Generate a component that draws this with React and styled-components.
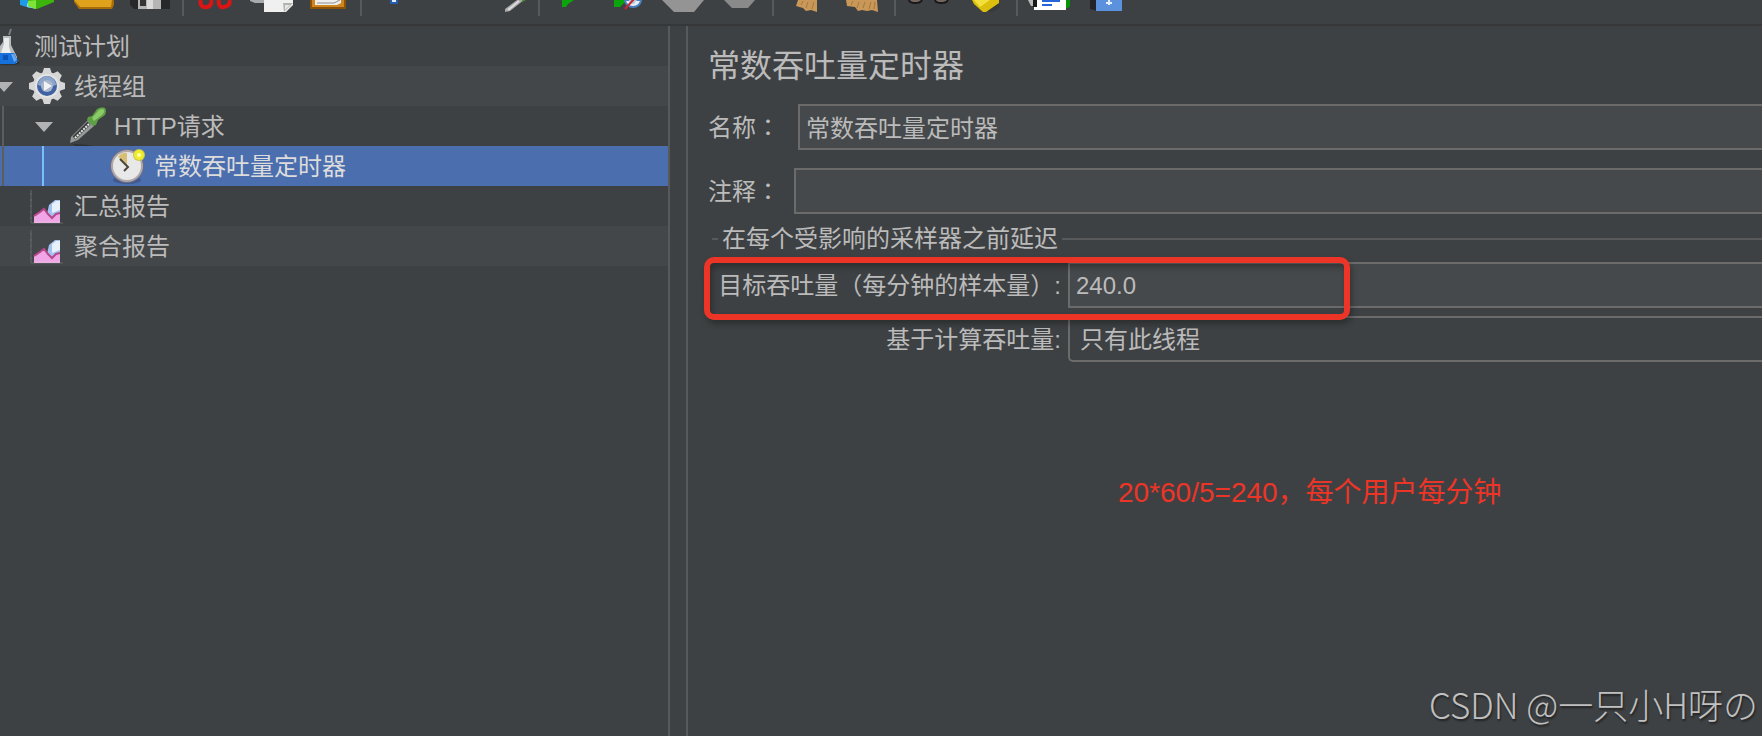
import styled, { createGlobalStyle, ThemeProvider } from 'styled-components';

const theme = {
  color: {
    background: '#3e4143',
    stripe: '#43474a',
    selected: '#4b6eaf',
    field: '#46494b',
    border: '#6b6b6b',
    line: '#58595a',
    text: '#bbbbbb',
    mark: '#ec3527',
  },
};

const GlobalStyle = createGlobalStyle`
  * {
    box-sizing: border-box;
  }

  body {
    margin: 0;
    overflow: hidden;
    background: ${theme.color.background};
    color: ${theme.color.text};
    font-family: 'Liberation Sans', 'Noto Sans CJK SC', sans-serif;
    font-size: 24px;
    line-height: 28px;
  }
`;

const Page = styled.div`
  position: relative;
  display: flex;
  flex-direction: column;
  min-height: 100vh;
`;

const Toolbar = styled.header`
  display: flex;
  height: 26px;
  padding-left: 10px;
  border-bottom: 2px solid #353739;
`;

const ToolButton = styled.button`
  flex: none;
  width: 56px;
  height: 24px;
  padding: 0;
  border: 0;
  background: none;

  svg {
    display: block;
  }
`;

const Separator = styled.span`
  flex: none;
  width: 2px;
  height: 16px;
  margin: 0 4px;
  background: ${({ theme }) => theme.color.line};
`;

const Workspace = styled.div`
  display: flex;
  flex: 1;
  gap: 16px;
`;

const Tree = styled.ul`
  flex: none;
  width: 670px;
  margin: 0;
  padding: 0;
  border-right: 2px solid ${({ theme }) => theme.color.line};
  list-style: none;
`;

const TreeRow = styled.li`
  display: flex;
  height: 40px;
  background: ${({ $selected, theme }) => ($selected ? theme.color.selected : 'none')};
  color: ${({ $selected }) => ($selected ? '#dcdcdc' : 'inherit')};
  line-height: 42px;

  &:nth-child(even) {
    background: ${({ $selected, theme }) => ($selected ? theme.color.selected : theme.color.stripe)};
  }
`;

const Guide = styled.span`
  flex: none;
  width: 40px;
  height: 40px;
  padding-left: 2px;

  &::before {
    content: '';
    display: block;
    width: 2px;
    height: 40px;
    background: ${({ $active }) => ($active ? '#79bdfb' : '#5b5d5f')};
  }
`;

const Toggle = styled.span`
  flex: none;
  width: 28px;
  height: 40px;

  svg {
    display: block;
    overflow: visible;
  }
`;

const TreeIcon = styled.span`
  flex: none;
  width: ${({ $width }) => $width}px;
  height: 40px;
  margin-right: 8px;

  svg {
    display: block;
    overflow: visible;
  }
`;

const Panel = styled.main`
  position: relative;
  flex: 1;
  min-width: 0;
  padding: 16px 0 0 20px;
  border-left: 2px solid ${({ theme }) => theme.color.line};
`;

const Title = styled.h1`
  margin: 0 0 14px;
  font-size: 32px;
  font-weight: normal;
  line-height: 48px;
`;

const FormRow = styled.div`
  display: flex;
  align-items: center;
  gap: ${({ $gap }) => $gap}px;
  margin-bottom: ${({ $space }) => $space}px;
`;

const Label = styled.label`
  flex: none;
  white-space: nowrap;
`;

const Colon = styled.span`
  font-family: 'Noto Sans CJK TC', sans-serif;
`;

const TextField = styled.input`
  flex: 1;
  min-width: 0;
  width: 100%;
  height: 46px;
  padding: 0 6px 2px;
  border: 2px solid ${({ theme }) => theme.color.border};
  border-right: 0;
  border-radius: 0;
  outline: 0;
  background: ${({ theme }) => theme.color.field};
  color: inherit;
  font: inherit;
`;

const Select = styled.select`
  width: 100%;
  height: 46px;
  padding: 2px 10px 0;
  border: 2px solid ${({ theme }) => theme.color.border};
  border-right: 0;
  border-radius: 5px 0 0 5px;
  outline: 0;
  appearance: none;
  background: transparent;
  color: inherit;
  font: inherit;
`;

const Group = styled.fieldset`
  min-width: 0;
  margin: 0 0 0 4px;
  padding: 0 0 0 6px;
  border: 0;
  border-top: 2px solid ${({ theme }) => theme.color.line};
`;

const Legend = styled.legend`
  padding: 0 4px;
`;

const GroupGrid = styled.div`
  position: relative;
  display: grid;
  grid-template-columns: 343px 1fr;
  align-items: center;
  gap: 8px 7px;
  padding-top: 9px;

  ${Label} {
    padding-top: 2px;
    text-align: right;
  }

  ${TextField} {
    padding: 2px 6px 0;
  }
`;

const Highlight = styled.div`
  position: absolute;
  top: 4px;
  left: -14px;
  width: 646px;
  height: 63px;
  border: 6px solid ${({ theme }) => theme.color.mark};
  border-radius: 10px;
  box-shadow: 2px 4px 6px rgba(0, 0, 0, 0.3), inset 2px 4px 6px rgba(0, 0, 0, 0.3);
  pointer-events: none;
`;

const Note = styled.p`
  position: absolute;
  top: 449px;
  left: 430px;
  margin: 0;
  color: ${({ theme }) => theme.color.mark};
  font-size: 28px;
  line-height: 36px;
  white-space: nowrap;
`;

const Watermark = styled.div`
  position: absolute;
  right: 4px;
  bottom: 8px;
  color: #c0c0c0;
  font-family: 'Noto Sans CJK SC', sans-serif;
  font-size: 35px;
  font-weight: 300;
  line-height: 48px;
  text-shadow: 1px 2px 2px rgba(0, 0, 0, 0.5);
  white-space: nowrap;
`;

const tools = [
  [
    {
      label: '模板',
      art: (
        <>
          <path d="M10 0h10v8l-10-3z" fill="#1e9be6" />
          <path d="M17 3l9 2v4l-9-2z" fill="#8ed9f2" />
          <path d="M18 0h26v2L27 9l-9-3z" fill="#3db40c" />
          <path d="M18 1l8-1v9l-8-3z" fill="#7ee43a" />
        </>
      ),
    },
    {
      label: '打开',
      art: (
        <>
          <path d="M8 0h40v5l-2 4H13L8 2z" fill="#a86c08" />
          <path d="M8 0h38l-1 7H14z" fill="#e0a11d" />
        </>
      ),
    },
    {
      label: '保存',
      art: (
        <>
          <path d="M8 0h40v9H12l-4-4z" fill="#27282a" />
          <path d="M16 0h23v9H16z" fill="#b5b5b5" />
          <path d="M18 0h6v6h-6z" fill="#343434" />
          <path d="M25 0h6v9h-6z" fill="#dadada" />
        </>
      ),
    },
  ],
  [
    {
      label: '剪切',
      art: (
        <g fill="none" stroke="#dc1414" strokeWidth="4">
          <path d="M13 0c-2 5 2 8 6 7s5-4 4-7" />
          <path d="M31 0c-1 4 1 8 5 7s7-3 5-7" />
        </g>
      ),
    },
    {
      label: '复制',
      art: (
        <>
          <path d="M6 0h17v3H11L6 1z" fill="#a8abad" />
          <path d="M20 0h29v5l-7 7H20z" fill="#f0f0f0" />
          <path d="M39 3h10l-9 9z" fill="#aeb5ad" />
          <path d="M41 5h5l-5 5z" fill="#e6e8e6" />
        </>
      ),
    },
    {
      label: '粘贴',
      art: (
        <>
          <path d="M10 0h36v9H10z" fill="#8b5207" />
          <path d="M12 0h32v7H12z" fill="#cf8620" />
          <path d="M15 0h26v3l-4 2H15z" fill="#efefef" />
          <path d="M17 3h17l6-3" fill="none" stroke="#8d8d8d" />
        </>
      ),
    },
  ],
  [
    {
      label: '展开',
      art: (
        <>
          <path d="M24 0h8v4h-8z" fill="#2759ad" />
          <path d="M26 0h4v2h-4z" fill="#e2ecf8" />
        </>
      ),
    },
    { label: '折叠', art: null },
    {
      label: '切换',
      art: (
        <>
          <path d="M39 0h7L32 11l-5 1v-3z" fill="#a9aaa9" />
          <path d="M41 1L30 10" stroke="#dcdcdc" strokeWidth="2" />
          <path d="M44 0h4l-4 2z" fill="#4d8f38" />
        </>
      ),
    },
  ],
  [
    { label: '启动', art: <path d="M18 0h12L24 4l-2 3h-4z" fill="#0aa50a" /> },
    {
      label: '不停顿启动',
      art: (
        <>
          <path d="M14 0h13l-7 7h-6z" fill="#0aa50a" />
          <path d="M25 0a8 7 0 0 0 16 0z" fill="#e9eff5" stroke="#4a80bd" strokeWidth="2" />
          <path d="M29 0h8l-3 4h-4z" fill="#b9cad9" />
          <path d="M25 9L34-1" stroke="#cf2230" strokeWidth="2" />
        </>
      ),
    },
    { label: '停止', art: <path d="M6 0h42L38 12H18z" fill="#949494" /> },
    { label: '关闭', art: <path d="M12 0h31l-7 8H20z" fill="#8a8a8a" /> },
  ],
  [
    {
      label: '清除',
      art: (
        <>
          <path d="M20 0h19v12l-6-2-5 1-3-3-7-2z" fill="#c99858" />
          <path d="M23 5l2-4M28 8l2-6M34 9l2-7" stroke="#a37840" />
        </>
      ),
    },
    {
      label: '清除全部',
      art: (
        <>
          <path d="M12 0h31l1 12-6-2-5 1-5-1-4 1-3-4-8-1z" fill="#c99858" />
          <path d="M17 5l2-4M23 8l2-6M29 8l2-6M35 9l2-7M40 9l1-7" stroke="#a37840" />
        </>
      ),
    },
  ],
  [
    {
      label: '查找',
      art: (
        <g fill="#75665f" stroke="#17181a" strokeWidth="2">
          <path d="M9 0c1 4 11 4 13 0" />
          <path d="M35 0c1 4 11 4 13 0" />
        </g>
      ),
    },
    {
      label: '重置查找',
      art: (
        <>
          <path d="M18 2l16 10q10-2 10-6V4z" fill="#37393a" />
          <path d="M16 0h27v3L30 12h-3L18 4z" fill="#dcbf0d" />
          <path d="M18 0h16L24 7z" fill="#f3df3d" />
        </>
      ),
    },
  ],
  [
    {
      label: '函数助手',
      art: (
        <>
          <path d="M6 0h8v6H9z" fill="#bababa" />
          <path d="M12 0h32v10H12z" fill="#ffffff" />
          <path d="M11 0h4v7h-4z" fill="#17181a" />
          <path d="M44 0h4v6l-2 2h-2z" fill="#079407" />
          <path d="M20 1h18M20 5h10" stroke="#2565dc" strokeWidth="2" />
        </>
      ),
    },
    {
      label: '帮助',
      art: (
        <>
          <path d="M12 0h8v11l-8-2z" fill="#222426" />
          <path d="M18 0h26v11H18z" fill="#5b91dd" />
          <path d="M31 0v5M28 3h6" stroke="#e5effc" strokeWidth="2" />
        </>
      ),
    },
  ],
];

const FlaskIcon = () => (
  <svg width="27" height="40" viewBox="0 0 27 40" aria-hidden="true">
    <ellipse cx="8" cy="37" rx="12" ry="2" fill="#303234" />
    <path d="M9 9l2-6" stroke="#7c7f82" strokeWidth="2" />
    <path d="M3 10h8v9l6 12v6H0V20l3-4z" fill="#b9bdc0" />
    <path d="M4 12h5v9l2 6H1l3-9z" fill="#eceded" />
    <path d="M0 27h14l4 8-3 3H0z" fill="#1671dd" />
    <path d="M11 28h3l3 6-3 2z" fill="#6aa6ee" />
    <path d="M3 29h5v5H3z" fill="#0755b6" />
  </svg>
);

const GearIcon = () => (
  <svg width="38" height="40" viewBox="0 0 38 40" aria-hidden="true">
    <g fill="#d6d6d6">
      <circle cx="19" cy="20" r="14" />
      {[0, 45, 90, 135].map((angle) => (
        <path key={angle} d="M16 2h6l2 6v24l-2 6h-6l-2-6V8z" transform={`rotate(${angle} 19 20)`} />
      ))}
    </g>
    <circle cx="19" cy="20" r="12" fill="#e4e4e4" />
    <circle cx="19" cy="20" r="10" fill="#3f62a3" />
    <path d="M10 19a9 9 0 0 1 18 0q-9 4-18 0z" fill="#8ca5cb" />
    <circle cx="19" cy="20" r="6" fill="#a9b6cc" />
    <path d="M16 15l8 5-8 5z" fill="#f1f2f4" />
  </svg>
);

const DropperIcon = () => (
  <svg width="38" height="40" viewBox="0 0 38 40" aria-hidden="true">
    <path d="M4 38q12 0 22 2H8z" fill="#2d2f30" />
    <path d="M20 14l6 6-16 14-8 3 1-6z" fill="#969997" />
    <path d="M21 17L6 32" stroke="#3a3e3c" strokeWidth="4" />
    <path d="M21 18L7 32" stroke="#e9eae9" strokeWidth="2" strokeDasharray="2 1" />
    <path d="M20 11l4-1 5-7q5-3 8-1 2 3 0 7l-7 5-2 5-3 1-6-6z" fill="#5d9f45" />
    <path d="M24 12l7-8q4-2 5 0t-2 5l-8 6z" fill="#8bcb68" />
  </svg>
);

const ClockIcon = () => (
  <svg width="38" height="40" viewBox="0 0 38 40" aria-hidden="true">
    <ellipse cx="19" cy="34" rx="14" ry="4" fill="#41598f" />
    <circle cx="19" cy="20" r="17" fill="#6b6c8d" />
    <circle cx="19" cy="20" r="16" fill="#b0a8a8" />
    <circle cx="19" cy="20" r="14" fill="#e8e8e8" />
    <path d="M19 20l-9-9q4-5 9-4z" fill="#d9bf75" />
    <path d="M12 13l8 8-4 4" fill="none" stroke="#4a463f" strokeWidth="2" />
    <circle cx="31" cy="9" r="6" fill="#c9c64c" />
    <circle cx="31" cy="9" r="5" fill="#f0ec2a" />
    <circle cx="31" cy="9" r="2" fill="#ffffb4" />
  </svg>
);

const ReportIcon = () => (
  <svg width="38" height="40" viewBox="0 0 38 40" aria-hidden="true">
    <path d="M3 4v33h32" fill="none" stroke="#65686a" strokeWidth="1" />
    <path d="M2 8h2M2 14h2M2 20h2M2 26h2M2 32h2" stroke="#65686a" />
    <path d="M19 28l2-9 6-5h5v18l-8 1z" fill="#a3c2f0" />
    <path d="M24 18l4-3h4v9l-8 3z" fill="#e6f1fc" />
    <path d="M6 37v-7l6-4 4-3 4 5 4 4 4-4h4v9z" fill="#f0a6e6" />
    <path d="M6 30l6-4 4-3 4 5 4 4 4-4 4-1" fill="none" stroke="#b6488a" strokeWidth="2" />
    <path d="M6 36h26" stroke="#e6b9df" />
  </svg>
);

const nodes = [
  { name: '测试计划', level: 0, icon: <FlaskIcon /> },
  { name: '线程组', level: 1, open: true, icon: <GearIcon /> },
  { name: 'HTTP请求', level: 2, open: true, guides: ['a'], icon: <DropperIcon /> },
  { name: '常数吞吐量定时器', level: 3, guides: ['a', 'b'], selected: true, icon: <ClockIcon /> },
  { name: '汇总报告', level: 1, icon: <ReportIcon /> },
  { name: '聚合报告', level: 1, icon: <ReportIcon /> },
];

const ToolGroup = ({ items, first }) => (
  <>
    {!first && <Separator />}
    {items.map(({ label, art }) => (
      <ToolButton key={label} type="button" aria-label={label}>
        <svg width="56" height="24" viewBox="0 0 56 24" aria-hidden="true">
          {art}
        </svg>
      </ToolButton>
    ))}
  </>
);

const TreeNode = ({ name, level, open, guides = [], selected, icon }) => (
  <TreeRow role="treeitem" aria-level={level + 1} aria-selected={!!selected} $selected={selected}>
    {guides.map((guide, index) => (
      <Guide key={guide} $active={index === 1} />
    ))}
    {level > 0 && (
      <Toggle>
        {open && (
          <svg width="28" height="40" viewBox="0 0 28 40" aria-hidden="true">
            <path d="M-5 16h18l-9 10z" fill="#b2b3b4" />
          </svg>
        )}
      </Toggle>
    )}
    <TreeIcon $width={level === 0 ? 26 : 38}>{icon}</TreeIcon>
    {name}
  </TreeRow>
);

const App = () => (
  <ThemeProvider theme={theme}>
    <GlobalStyle />
    <Page lang="zh-CN">
      <Toolbar>
        {tools.map((items, index) => (
          <ToolGroup key={items[0].label} items={items} first={index === 0} />
        ))}
      </Toolbar>
      <Workspace>
        <Tree role="tree">
          {nodes.map((node) => (
            <TreeNode key={node.name} {...node} />
          ))}
        </Tree>
        <Panel>
          <Title>常数吞吐量定时器</Title>
          <FormRow $gap={18} $space={18}>
            <Label htmlFor="name">
              名称<Colon lang="zh-TW">：</Colon>
            </Label>
            <TextField id="name" defaultValue="常数吞吐量定时器" />
          </FormRow>
          <FormRow $gap={14} $space={11}>
            <Label htmlFor="comment">
              注释<Colon lang="zh-TW">：</Colon>
            </Label>
            <TextField id="comment" />
          </FormRow>
          <Group>
            <Legend>在每个受影响的采样器之前延迟</Legend>
            <GroupGrid>
              <Label htmlFor="throughput">目标吞吐量（每分钟的样本量）:</Label>
              <TextField id="throughput" defaultValue="240.0" />
              <Label htmlFor="mode">基于计算吞吐量:</Label>
              <Select id="mode">
                <option>只有此线程</option>
              </Select>
              <Highlight />
            </GroupGrid>
          </Group>
          <Note>20*60/5=240，每个用户每分钟</Note>
        </Panel>
      </Workspace>
      <Watermark>CSDN @一只小H呀の</Watermark>
    </Page>
  </ThemeProvider>
);

export default App;
